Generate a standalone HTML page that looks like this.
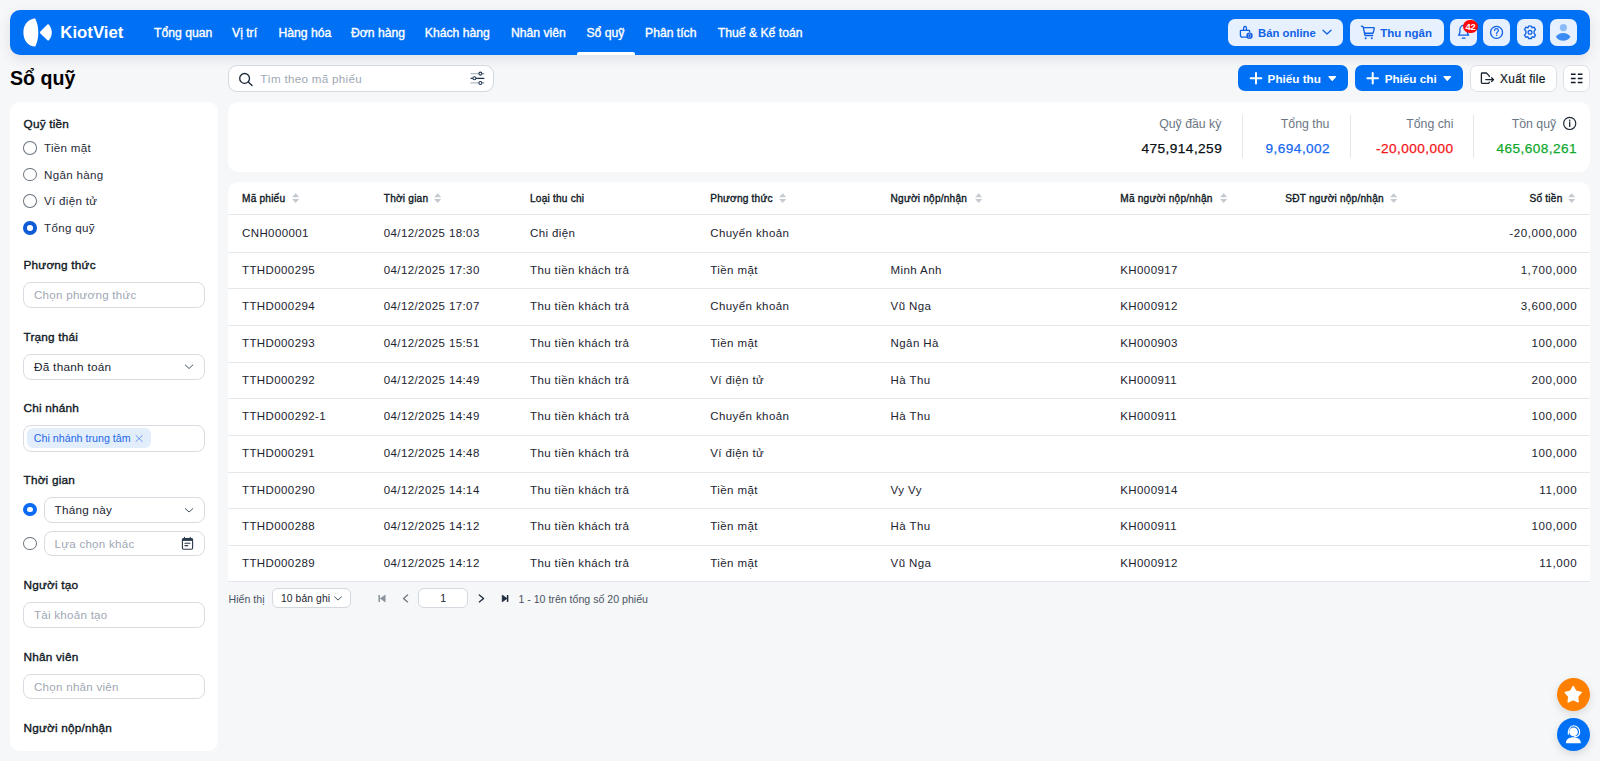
<!DOCTYPE html>
<html lang="vi">
<head>
<meta charset="utf-8">
<title>Sổ quỹ - KiotViet</title>
<style>
*{box-sizing:border-box;margin:0;padding:0}
html,body{width:1600px;height:761px;overflow:hidden}
body{background:#F6F7F9;font-family:"Liberation Sans",sans-serif;color:#0F1824;position:relative}
.abs{position:absolute}
svg{display:block}
#nav{position:absolute;left:10px;top:10px;width:1580px;height:44.6px;background:#0070F4;border-radius:10px;box-shadow:0 4px 12px rgba(20,30,50,.10)}
.navi{position:absolute;top:0;height:45px;line-height:45px;color:#fff;font-weight:normal;-webkit-text-stroke:0.35px #fff;font-size:12.2px;letter-spacing:0px;white-space:nowrap}
.nbtn{position:absolute;top:9px;height:27px;background:#E6F0FF;border-radius:7px;color:#0F62E6;font-weight:bold;font-size:11.4px;line-height:28.4px;white-space:nowrap}
.title{position:absolute;left:10px;top:65px;height:26px;line-height:26px;font-size:19.6px;font-weight:bold;color:#000;white-space:nowrap}
.card{position:absolute;background:#fff;border-radius:10px}
.bbtn{position:absolute;top:65px;height:26px;border-radius:7px;background:#0070F4;color:#fff;font-weight:bold;font-size:11.7px;line-height:26px;white-space:nowrap}
.wbtn{position:absolute;top:65px;height:26px;border-radius:7px;background:#fff;border:1px solid #DDE1E6;color:#0F1824;font-size:12.6px;line-height:24px;white-space:nowrap}
.lbl{position:absolute;left:23.5px;height:20px;line-height:20px;font-weight:normal;-webkit-text-stroke:0.35px #0F1824;font-size:11.8px;letter-spacing:0.2px;color:#0F1824;white-space:nowrap}
.radio{position:absolute;left:23px;width:13.8px;height:13.6px;border-radius:50%;border:1.1px solid #6B7480;background:#fff}
.radio.on{border:4.1px solid #0F5BD6}
.rlbl{position:absolute;left:44px;height:20px;line-height:20px;font-size:11.6px;letter-spacing:0.3px;margin-top:0px;color:#1F2A37;white-space:nowrap}
.inp{position:absolute;left:23px;width:182px;height:26px;border:1px solid #D8DCE2;border-radius:8px;background:#fff;font-size:11.6px;letter-spacing:0.25px;line-height:24px;padding-left:10px;color:#A0A8B4;white-space:nowrap}
.th{position:absolute;top:188.8px;height:20px;line-height:20px;font-weight:normal;-webkit-text-stroke:0.35px #0F1824;font-size:10.1px;letter-spacing:0.22px;color:#0F1824;white-space:nowrap}
.sort{position:absolute;top:193px}
.rowb{position:absolute;left:228px;width:1362px;height:1px;background:#E4E7EB}
.td{position:absolute;height:20px;line-height:20px;font-size:11.5px;letter-spacing:0.4px;color:#1B2430;white-space:nowrap}
.tdr{position:absolute;height:20px;line-height:20px;font-size:11.6px;letter-spacing:0.55px;margin-right:-0.55px;color:#1B2430;white-space:nowrap;right:13.5px;text-align:right}
.slbl{position:absolute;top:114px;height:20px;line-height:20px;font-size:12.3px;color:#6B7683;white-space:nowrap;text-align:right}
.sval{position:absolute;top:138.6px;height:20px;line-height:20px;font-size:13.6px;letter-spacing:0.45px;margin-right:-0.45px;-webkit-text-stroke:0.25px currentColor;color:#0F1824;white-space:nowrap;text-align:right}
.sdiv{position:absolute;top:115px;width:1px;height:43px;background:#E4E7EB}
.pg{position:absolute;top:588.8px;height:20px;line-height:20px;font-size:10.6px;color:#4A5563;white-space:nowrap}
</style>
</head>
<body>
<div id="nav"></div>
<svg class="abs" style="left:18px;top:14px" width="40" height="36" viewBox="0 0 40 36">
  <path d="M16.2 4.4 C8.8 5.8 5.4 11.5 5.4 18.4 C5.4 25.5 9 31.2 16.4 32.6 C16.9 32.7 17.3 32.4 17.5 32 C19.4 28 20.3 23.5 20.3 18.4 C20.3 13.3 19.4 8.9 17.4 4.9 C17.2 4.5 16.7 4.3 16.2 4.4 Z" fill="#fff"/>
  <path d="M22.4 17.5 L29.4 10.6 C29.9 10.1 30.8 10.2 31.1 10.8 C32.9 13.3 33.8 15.8 33.8 18.4 C33.8 21.1 32.9 23.6 31.1 26.1 C30.7 26.7 29.9 26.8 29.4 26.3 L22.4 19.4 C21.9 18.9 21.9 18 22.4 17.5 Z" fill="#fff"/>
</svg>
<div class="abs" style="left:60.3px;top:20px;height:25px;line-height:25px;color:#fff;font-weight:bold;font-size:16.8px;white-space:nowrap">KiotViet</div>
<div class="navi" style="left:154px;top:10.8px">Tổng quan</div>
<div class="navi" style="left:232px;top:10.8px">Vị trí</div>
<div class="navi" style="left:278.4px;top:10.8px">Hàng hóa</div>
<div class="navi" style="left:351px;top:10.8px">Đơn hàng</div>
<div class="navi" style="left:424.8px;top:10.8px">Khách hàng</div>
<div class="navi" style="left:511px;top:10.8px">Nhân viên</div>
<div class="navi" style="left:586.4px;top:10.8px">Sổ quỹ</div>
<div class="navi" style="left:645px;top:10.8px">Phân tích</div>
<div class="navi" style="left:717.8px;top:10.8px">Thuế &amp; Kế toán</div>
<div class="abs" style="left:577px;top:51.8px;width:58px;height:3px;background:#fff;border-radius:2px 2px 0 0"></div>

<div class="nbtn" style="left:1228.2px;top:19px;width:115px"></div>
<svg class="abs" style="left:1234px;top:20px" width="30" height="24" viewBox="1234 20 30 24">
  <path d="M1243.6 30 L1243.6 28.6 C1243.6 27.2 1244.2 26.3 1245 26.3 C1245.8 26.3 1246.5 27.2 1246.5 28.6 L1246.5 30" fill="none" stroke="#0F62E6" stroke-width="1.3" stroke-linecap="round"/>
  <path d="M1246.5 37.2 L1242.6 37.2 C1241.3 37.2 1240.4 36.3 1240.4 35 L1240.4 31 C1240.4 30.6 1240.7 30.3 1241.1 30.3 L1249 30.3 C1249.4 30.3 1249.6 30.6 1249.6 31 L1249.6 32" fill="none" stroke="#0F62E6" stroke-width="1.3" stroke-linecap="round" stroke-linejoin="round"/>
  <circle cx="1249.5" cy="35.8" r="3.2" fill="#0F62E6"/>
  <ellipse cx="1249.5" cy="35.8" rx="1" ry="2.3" fill="none" stroke="#C9B8F0" stroke-width="0.6"/>
</svg>
<div class="nbtn" style="left:1258px;top:19px;font-size:11.3px;background:none">Bán online</div>
<svg class="abs" style="left:1322px;top:28px" width="10" height="8" viewBox="0 0 10 8"><path d="M1 2.2 L5 6 L9 2.2" fill="none" stroke="#0F62E6" stroke-width="1.3" stroke-linecap="round" stroke-linejoin="round"/></svg>

<div class="nbtn" style="left:1350px;top:19px;width:93.5px"></div>
<svg class="abs" style="left:1356px;top:20px" width="30" height="24" viewBox="1356 20 30 24">
  <path d="M1361.4 26.2 L1362.6 26.5 C1363 26.6 1363.3 26.9 1363.3 27.3 L1364.9 35 C1365 35.3 1365.2 35.5 1365.5 35.5 L1372.7 35.5" fill="none" stroke="#0F62E6" stroke-width="1.35" stroke-linecap="round" stroke-linejoin="round"/>
  <path d="M1363.6 27.6 L1373.7 27.6 C1374.1 27.6 1374.4 28 1374.3 28.4 L1373.2 32.7 C1373.1 33 1372.9 33.2 1372.6 33.2 L1364.8 33.2" fill="none" stroke="#0F62E6" stroke-width="1.35" stroke-linecap="round" stroke-linejoin="round"/>
  <circle cx="1365.6" cy="38.2" r="1" fill="#0F62E6"/><circle cx="1371.8" cy="38.2" r="1" fill="#0F62E6"/>
</svg>
<div class="nbtn" style="left:1380.3px;top:19px;font-size:11.5px;background:none">Thu ngân</div>

<div class="nbtn" style="left:1450.4px;top:19px;width:26.6px"></div>
<svg class="abs" style="left:1450px;top:18px" width="30" height="28" viewBox="1450 18 30 28">
  <path d="M1458.6 35.2 L1468.6 35.2 C1467.6 34.2 1467.3 33 1467.3 31.5 L1467.3 29.6 C1467.3 27.3 1465.6 25.4 1463.6 25.4 C1461.6 25.4 1459.9 27.3 1459.9 29.6 L1459.9 31.5 C1459.9 33 1459.6 34.2 1458.6 35.2 Z" fill="none" stroke="#0F62E6" stroke-width="1.3" stroke-linejoin="round"/>
  <path d="M1462.3 38.2 L1465 38.2" stroke="#0F62E6" stroke-width="1.3" stroke-linecap="round"/>
</svg>
<div class="abs" style="left:1462.6px;top:19.7px;width:15.6px;height:13.2px;border-radius:7px;background:#F70A0A;color:#fff;font-weight:bold;font-size:9.4px;line-height:14.6px;text-align:center;letter-spacing:-0.2px">42</div>

<div class="nbtn" style="left:1483.3px;top:19px;width:26.6px"></div>
<svg class="abs" style="left:1482px;top:18px" width="30" height="28" viewBox="1482 18 30 28">
  <circle cx="1496.55" cy="32.35" r="6" fill="none" stroke="#0F62E6" stroke-width="1.3"/>
  <path d="M1494.6 30.6 C1494.6 29.5 1495.4 28.7 1496.5 28.7 C1497.6 28.7 1498.4 29.5 1498.4 30.5 C1498.4 31.8 1496.6 32 1496.6 33.5" fill="none" stroke="#0F62E6" stroke-width="1.2" stroke-linecap="round"/>
  <circle cx="1496.6" cy="35.3" r="0.75" fill="#0F62E6"/>
</svg>

<div class="nbtn" style="left:1516.5px;top:19px;width:26.8px"></div>
<svg class="abs" style="left:1514px;top:18px" width="32" height="28" viewBox="-16 -14.3 32 28">
  <path d="M-1.4 -6.2 L1.4 -6.2 L2.1 -4.4 L4.1 -5.1 L5.5 -2.8 L4.1 -1.2 L4.1 1.2 L5.5 2.8 L4.1 5.1 L2.1 4.4 L1.4 6.2 L-1.4 6.2 L-2.1 4.4 L-4.1 5.1 L-5.5 2.8 L-4.1 1.2 L-4.1 -1.2 L-5.5 -2.8 L-4.1 -5.1 L-2.1 -4.4 Z" fill="none" stroke="#0F62E6" stroke-width="1.3" stroke-linejoin="round"/>
  <circle cx="0" cy="0" r="1.9" fill="none" stroke="#0F62E6" stroke-width="1.3"/>
</svg>

<div class="nbtn" style="left:1550px;top:19px;width:26.8px"></div>
<svg class="abs" style="left:1548px;top:18px" width="44" height="28" viewBox="1548 18 44 28">
  <circle cx="1563.4" cy="27.6" r="3.6" fill="#8CBBFA"/>
  <path d="M1555.9 36.7 C1557.3 34.2 1560.2 32.9 1563.2 32.9 C1566.2 32.9 1569.1 34.2 1570.4 36.7 C1569.1 39.3 1566.2 40.8 1563.2 40.8 C1560.2 40.8 1557.3 39.3 1555.9 36.7 Z" fill="#3B8BF5"/>
</svg>

<div class="title">Sổ quỹ</div>
<div class="abs" style="left:228.4px;top:65.2px;width:266.1px;height:26.6px;background:#fff;border:1px solid #D3D8DE;border-radius:9px"></div>
<svg class="abs" style="left:236px;top:70px" width="20" height="18" viewBox="236 70 20 18">
  <circle cx="244.6" cy="78.4" r="4.9" fill="none" stroke="#1B2A3A" stroke-width="1.35"/>
  <path d="M248.3 82.1 L252 85.5" stroke="#1B2A3A" stroke-width="1.4" stroke-linecap="round"/>
</svg>
<div class="abs" style="left:260.2px;top:68.5px;height:20px;line-height:20px;font-size:11.6px;letter-spacing:0.3px;color:#A0A8B4;white-space:nowrap">Tìm theo mã phiếu</div>
<svg class="abs" style="left:464px;top:66px" width="28" height="24" viewBox="464 66 28 24">
  <path d="M471 73.6 L478.8 73.6 M471 82.9 L478.8 82.9" stroke="#B3BAC3" stroke-width="1.2" stroke-linecap="round"/>
  <path d="M482 73.6 L483.9 73.6 M482 82.9 L483.9 82.9" stroke="#8F99A5" stroke-width="1.2" stroke-linecap="round"/>
  <path d="M476 78.3 L483.9 78.3 M471 78.3 L472.8 78.3" stroke="#1E3450" stroke-width="1.2" stroke-linecap="round"/>
  <circle cx="480.4" cy="73.6" r="1.5" fill="#fff" stroke="#1E3450" stroke-width="1.05"/>
  <circle cx="474.4" cy="78.3" r="1.5" fill="#fff" stroke="#1E3450" stroke-width="1.05"/>
  <circle cx="480.4" cy="82.9" r="1.5" fill="#fff" stroke="#1E3450" stroke-width="1.05"/>
</svg>

<div class="bbtn" style="left:1238.4px;width:109.6px;height:26.3px"></div>
<svg class="abs" style="left:1248px;top:72px" width="16" height="13" viewBox="1248 72 16 13"><path d="M1256 73 L1256 83.5 M1250.7 78.25 L1261.3 78.25" stroke="#fff" stroke-width="2" stroke-linecap="round"/></svg>
<div class="bbtn" style="left:1267.6px;top:65.6px;background:none">Phiếu thu</div>
<svg class="abs" style="left:1326px;top:74px" width="12" height="9" viewBox="1326 74 12 9"><path d="M1328.9 76.6 L1335.6 76.6 L1332.25 80.3 Z" fill="#fff" stroke="#fff" stroke-width="1.2" stroke-linejoin="round"/></svg>

<div class="bbtn" style="left:1355px;width:107.7px;height:26.3px"></div>
<svg class="abs" style="left:1365px;top:72px" width="16" height="13" viewBox="1365 72 16 13"><path d="M1372.7 73 L1372.7 83.5 M1367.4 78.25 L1378 78.25" stroke="#fff" stroke-width="2" stroke-linecap="round"/></svg>
<div class="bbtn" style="left:1384.7px;top:65.6px;background:none">Phiếu chi</div>
<svg class="abs" style="left:1441px;top:74px" width="12" height="9" viewBox="1441 74 12 9"><path d="M1444 76.6 L1450.6 76.6 L1447.3 80.3 Z" fill="#fff" stroke="#fff" stroke-width="1.2" stroke-linejoin="round"/></svg>

<div class="wbtn" style="left:1470.3px;width:86.3px;height:26.6px"></div>
<svg class="abs" style="left:1474px;top:66px" width="30" height="24" viewBox="1474 66 30 24">
  <path d="M1489.3 76.6 L1489.3 75.9 L1486.4 73 L1482.2 73 C1481.7 73 1481.4 73.3 1481.4 73.8 L1481.4 82.6 C1481.4 83.1 1481.7 83.4 1482.2 83.4 L1488.5 83.4 C1489 83.4 1489.3 83.1 1489.3 82.6 L1489.3 82.1" fill="none" stroke="#1B2430" stroke-width="1.3" stroke-linejoin="round" stroke-linecap="round"/>
  <path d="M1485.8 79.6 L1493.5 79.6 M1491.6 77.7 L1493.6 79.6 L1491.6 81.5" fill="none" stroke="#1B2430" stroke-width="1.3" stroke-linecap="round" stroke-linejoin="round"/>
</svg>
<div class="wbtn" style="left:1500px;top:65.5px;border:0;background:none;height:26px;line-height:26px;font-size:11.9px;letter-spacing:0.3px;-webkit-text-stroke:0.2px #0F1824">Xuất file</div>

<div class="wbtn" style="left:1563.4px;width:26.2px;height:26.6px"></div>
<svg class="abs" style="left:1568px;top:71px" width="18" height="14" viewBox="1568 71 18 14">
  <path d="M1570.9 74.3 L1575.6 74.3 M1577.8 74.3 L1582.5 74.3 M1570.9 78.4 L1575.6 78.4 M1577.8 78.4 L1582.5 78.4 M1570.9 82.5 L1575.6 82.5 M1577.8 82.5 L1582.5 82.5" stroke="#0F1824" stroke-width="1.5"/>
</svg>
<div class="card" style="left:10px;top:102px;width:208px;height:648.5px"></div>
<div class="lbl" style="top:113.5px">Quỹ tiền</div>
<div class="radio" style="top:141.2px"></div><div class="rlbl" style="top:138.2px">Tiền mặt</div>
<div class="radio" style="top:167.5px"></div><div class="rlbl" style="top:164.5px">Ngân hàng</div>
<div class="radio" style="top:194px"></div><div class="rlbl" style="top:191px">Ví điện tử</div>
<div class="radio on" style="top:221.2px"></div><div class="rlbl" style="top:218.2px">Tổng quỹ</div>

<div class="lbl" style="top:254.9px">Phương thức</div>
<div class="inp" style="top:282px">Chọn phương thức</div>

<div class="lbl" style="top:326.5px">Trạng thái</div>
<div class="inp" style="top:353.6px;color:#1B2430;font-size:11.8px">Đã thanh toán</div>
<svg class="abs" style="left:183px;top:362px" width="12" height="9" viewBox="183 362 12 9"><path d="M185.3 365 L189.05 368.5 L192.8 365" fill="none" stroke="#3A4756" stroke-width="0.95" stroke-linecap="round" stroke-linejoin="round"/></svg>

<div class="lbl" style="top:398.2px">Chi nhánh</div>
<div class="inp" style="top:425.3px;height:26.3px"></div>
<div class="abs" style="left:26.8px;top:428.4px;width:124px;height:19.6px;background:#E3EEFD;border-radius:6px"></div>
<div class="abs" style="left:33.8px;top:428px;height:20px;line-height:20px;font-size:10.7px;color:#2468E8;white-space:nowrap">Chi nhánh trung tâm</div>
<svg class="abs" style="left:134px;top:433px" width="10" height="10" viewBox="134 433 10 10"><path d="M136 435.5 L142.3 441.5 M142.3 435.5 L136 441.5" stroke="#5A8BEA" stroke-width="0.9" stroke-linecap="round"/></svg>

<div class="lbl" style="top:469.6px">Thời gian</div>
<div class="radio on" style="top:502.9px;border-color:#0B6BF5"></div>
<div class="inp" style="top:497.3px;left:43.5px;width:161px;height:25.6px;color:#1B2430;font-size:11.7px">Tháng này</div>
<svg class="abs" style="left:183px;top:506px" width="12" height="9" viewBox="183 506 12 9"><path d="M185.3 508.6 L189.05 512 L192.8 508.6" fill="none" stroke="#3A4756" stroke-width="0.95" stroke-linecap="round" stroke-linejoin="round"/></svg>
<div class="radio" style="top:536.5px"></div>
<div class="inp" style="top:530.5px;left:43.5px;width:161px;height:25.9px">Lựa chọn khác</div>
<svg class="abs" style="left:178px;top:534px" width="18" height="18" viewBox="178 534 18 18">
  <rect x="182.4" y="538.6" width="10.2" height="10.7" rx="1.2" fill="none" stroke="#2B3A4A" stroke-width="1.1"/>
  <path d="M182.4 539.8 L192.6 539.8" stroke="#2B3A4A" stroke-width="2.2"/>
  <path d="M184.5 537.4 L184.5 538.4 M190.3 537.4 L190.3 538.4" stroke="#2B3A4A" stroke-width="1.1" stroke-linecap="round"/>
  <path d="M184.9 543.2 L190 543.2 M184.9 545.6 L187.8 545.6" stroke="#2B3A4A" stroke-width="1.1" stroke-linecap="round"/>
</svg>

<div class="lbl" style="top:575.4px">Người tạo</div>
<div class="inp" style="top:602.1px;height:25.9px">Tài khoản tạo</div>

<div class="lbl" style="top:646.9px">Nhân viên</div>
<div class="inp" style="top:673.8px;height:25.6px">Chọn nhân viên</div>

<div class="lbl" style="top:718.1px">Người nộp/nhận</div>
<div class="card" style="left:228px;top:102px;width:1362px;height:69.8px"></div>
<div class="slbl" style="right:378.6px">Quỹ đầu kỳ</div>
<div class="sval" style="right:378.3px;color:#0A0F16">475,914,259</div>
<div class="sdiv" style="left:1242px"></div>
<div class="slbl" style="right:270.6px">Tổng thu</div>
<div class="sval" style="right:270.3px;color:#1769F0">9,694,002</div>
<div class="sdiv" style="left:1350.2px"></div>
<div class="slbl" style="right:146.6px">Tổng chi</div>
<div class="sval" style="right:147px;color:#F5141A">-20,000,000</div>
<div class="sdiv" style="left:1473.3px"></div>
<div class="slbl" style="right:43.8px">Tồn quỹ</div>
<svg class="abs" style="left:1560px;top:114px" width="20" height="20" viewBox="1560 114 20 20">
  <circle cx="1569.7" cy="123.45" r="6.05" fill="none" stroke="#1F2A37" stroke-width="1.2"/>
  <path d="M1569.7 122 L1569.7 126.4" stroke="#1F2A37" stroke-width="1.3" stroke-linecap="round"/>
  <circle cx="1569.7" cy="120.2" r="0.8" fill="#1F2A37"/>
</svg>
<div class="sval" style="right:23.4px;color:#10A92E">465,608,261</div>
<div class="card" style="left:228px;top:181.5px;width:1362px;height:400.5px;border-radius:10px 10px 0 0"></div>
<div class="th" style="left:242px">Mã phiếu</div>
<svg class="sort" style="left:291.60px" width="7.5" height="11" viewBox="0 0 7.5 11"><path d="M3.65 0.3 L7.2 4.3 L0.1 4.3 Z M0.1 6 L7.2 6 L3.65 10 Z" fill="#C5CAD1"/></svg>
<div class="th" style="left:383.75px">Thời gian</div>
<svg class="sort" style="left:433.55px" width="7.5" height="11" viewBox="0 0 7.5 11"><path d="M3.65 0.3 L7.2 4.3 L0.1 4.3 Z M0.1 6 L7.2 6 L3.65 10 Z" fill="#C5CAD1"/></svg>
<div class="th" style="left:530px">Loại thu chi</div>
<div class="th" style="left:710.3px">Phương thức</div>
<svg class="sort" style="left:779.20px" width="7.5" height="11" viewBox="0 0 7.5 11"><path d="M3.65 0.3 L7.2 4.3 L0.1 4.3 Z M0.1 6 L7.2 6 L3.65 10 Z" fill="#C5CAD1"/></svg>
<div class="th" style="left:890.6px">Người nộp/nhận</div>
<svg class="sort" style="left:974.50px" width="7.5" height="11" viewBox="0 0 7.5 11"><path d="M3.65 0.3 L7.2 4.3 L0.1 4.3 Z M0.1 6 L7.2 6 L3.65 10 Z" fill="#C5CAD1"/></svg>
<div class="th" style="left:1120.3px">Mã người nộp/nhận</div>
<svg class="sort" style="left:1219.50px" width="7.5" height="11" viewBox="0 0 7.5 11"><path d="M3.65 0.3 L7.2 4.3 L0.1 4.3 Z M0.1 6 L7.2 6 L3.65 10 Z" fill="#C5CAD1"/></svg>
<div class="th" style="left:1285.3px">SĐT người nộp/nhận</div>
<svg class="sort" style="left:1390.40px" width="7.5" height="11" viewBox="0 0 7.5 11"><path d="M3.65 0.3 L7.2 4.3 L0.1 4.3 Z M0.1 6 L7.2 6 L3.65 10 Z" fill="#C5CAD1"/></svg>
<div class="th" style="right:37.5px;text-align:right">Số tiền</div>
<svg class="sort" style="left:1567.60px" width="7.5" height="11" viewBox="0 0 7.5 11"><path d="M3.65 0.3 L7.2 4.3 L0.1 4.3 Z M0.1 6 L7.2 6 L3.65 10 Z" fill="#C5CAD1"/></svg>
<div class="rowb" style="top:214px"></div>
<div class="rowb" style="top:252px"></div>
<div class="rowb" style="top:288px"></div>
<div class="rowb" style="top:325px"></div>
<div class="rowb" style="top:362px"></div>
<div class="rowb" style="top:398px"></div>
<div class="rowb" style="top:435px"></div>
<div class="rowb" style="top:472px"></div>
<div class="rowb" style="top:508px"></div>
<div class="rowb" style="top:545px"></div>
<div class="rowb" style="top:581px"></div>
<div class="td" style="left:242px;top:223.10px">CNH000001</div>
<div class="td" style="left:383.75px;top:223.10px">04/12/2025 18:03</div>
<div class="td" style="left:530px;top:223.10px">Chi điện</div>
<div class="td" style="left:710.3px;top:223.10px">Chuyển khoản</div>
<div class="tdr" style="right:23.4px;top:223.10px">-20,000,000</div>
<div class="td" style="left:242px;top:259.77px">TTHD000295</div>
<div class="td" style="left:383.75px;top:259.77px">04/12/2025 17:30</div>
<div class="td" style="left:530px;top:259.77px">Thu tiền khách trả</div>
<div class="td" style="left:710.3px;top:259.77px">Tiền mặt</div>
<div class="td" style="left:890.6px;top:259.77px">Minh Anh</div>
<div class="td" style="left:1120.3px;top:259.77px">KH000917</div>
<div class="tdr" style="right:23.4px;top:259.77px">1,700,000</div>
<div class="td" style="left:242px;top:296.44px">TTHD000294</div>
<div class="td" style="left:383.75px;top:296.44px">04/12/2025 17:07</div>
<div class="td" style="left:530px;top:296.44px">Thu tiền khách trả</div>
<div class="td" style="left:710.3px;top:296.44px">Chuyển khoản</div>
<div class="td" style="left:890.6px;top:296.44px">Vũ Nga</div>
<div class="td" style="left:1120.3px;top:296.44px">KH000912</div>
<div class="tdr" style="right:23.4px;top:296.44px">3,600,000</div>
<div class="td" style="left:242px;top:333.11px">TTHD000293</div>
<div class="td" style="left:383.75px;top:333.11px">04/12/2025 15:51</div>
<div class="td" style="left:530px;top:333.11px">Thu tiền khách trả</div>
<div class="td" style="left:710.3px;top:333.11px">Tiền mặt</div>
<div class="td" style="left:890.6px;top:333.11px">Ngân Hà</div>
<div class="td" style="left:1120.3px;top:333.11px">KH000903</div>
<div class="tdr" style="right:23.4px;top:333.11px">100,000</div>
<div class="td" style="left:242px;top:369.78px">TTHD000292</div>
<div class="td" style="left:383.75px;top:369.78px">04/12/2025 14:49</div>
<div class="td" style="left:530px;top:369.78px">Thu tiền khách trả</div>
<div class="td" style="left:710.3px;top:369.78px">Ví điện tử</div>
<div class="td" style="left:890.6px;top:369.78px">Hà Thu</div>
<div class="td" style="left:1120.3px;top:369.78px">KH000911</div>
<div class="tdr" style="right:23.4px;top:369.78px">200,000</div>
<div class="td" style="left:242px;top:406.45px">TTHD000292-1</div>
<div class="td" style="left:383.75px;top:406.45px">04/12/2025 14:49</div>
<div class="td" style="left:530px;top:406.45px">Thu tiền khách trả</div>
<div class="td" style="left:710.3px;top:406.45px">Chuyển khoản</div>
<div class="td" style="left:890.6px;top:406.45px">Hà Thu</div>
<div class="td" style="left:1120.3px;top:406.45px">KH000911</div>
<div class="tdr" style="right:23.4px;top:406.45px">100,000</div>
<div class="td" style="left:242px;top:443.12px">TTHD000291</div>
<div class="td" style="left:383.75px;top:443.12px">04/12/2025 14:48</div>
<div class="td" style="left:530px;top:443.12px">Thu tiền khách trả</div>
<div class="td" style="left:710.3px;top:443.12px">Ví điện tử</div>
<div class="tdr" style="right:23.4px;top:443.12px">100,000</div>
<div class="td" style="left:242px;top:479.79px">TTHD000290</div>
<div class="td" style="left:383.75px;top:479.79px">04/12/2025 14:14</div>
<div class="td" style="left:530px;top:479.79px">Thu tiền khách trả</div>
<div class="td" style="left:710.3px;top:479.79px">Tiền mặt</div>
<div class="td" style="left:890.6px;top:479.79px">Vy Vy</div>
<div class="td" style="left:1120.3px;top:479.79px">KH000914</div>
<div class="tdr" style="right:23.4px;top:479.79px">11,000</div>
<div class="td" style="left:242px;top:516.46px">TTHD000288</div>
<div class="td" style="left:383.75px;top:516.46px">04/12/2025 14:12</div>
<div class="td" style="left:530px;top:516.46px">Thu tiền khách trả</div>
<div class="td" style="left:710.3px;top:516.46px">Tiền mặt</div>
<div class="td" style="left:890.6px;top:516.46px">Hà Thu</div>
<div class="td" style="left:1120.3px;top:516.46px">KH000911</div>
<div class="tdr" style="right:23.4px;top:516.46px">100,000</div>
<div class="td" style="left:242px;top:553.13px">TTHD000289</div>
<div class="td" style="left:383.75px;top:553.13px">04/12/2025 14:12</div>
<div class="td" style="left:530px;top:553.13px">Thu tiền khách trả</div>
<div class="td" style="left:710.3px;top:553.13px">Tiền mặt</div>
<div class="td" style="left:890.6px;top:553.13px">Vũ Nga</div>
<div class="td" style="left:1120.3px;top:553.13px">KH000912</div>
<div class="tdr" style="right:23.4px;top:553.13px">11,000</div>
<div class="pg" style="left:228.6px">Hiển thị</div>
<div class="abs" style="left:272.1px;top:588.4px;width:79.2px;height:19.8px;border:1px solid #D3D8DE;border-radius:6px;background:#fff"></div>
<div class="pg" style="left:281px;top:589.3px;color:#1B2430;font-size:10.3px;letter-spacing:0.1px">10 bản ghi</div>
<svg class="abs" style="left:331px;top:594px" width="12" height="9" viewBox="331 594 12 9"><path d="M334.6 596.8 L338 600.1 L341.4 596.8" fill="none" stroke="#3A4756" stroke-width="0.95" stroke-linecap="round" stroke-linejoin="round"/></svg>
<svg class="abs" style="left:374px;top:590px" width="140" height="16" viewBox="374 590 140 16">
  <path d="M379.2 595 L379.2 601.9" stroke="#8A939D" stroke-width="1.5"/>
  <path d="M385.2 595 L385.2 601.9 L380.3 598.45 Z" fill="#8A939D" stroke="#8A939D" stroke-width="0.6" stroke-linejoin="round"/>
  <path d="M407.6 595 L403.5 598.45 L407.6 601.9" fill="none" stroke="#6F7882" stroke-width="1.3" stroke-linecap="round" stroke-linejoin="round"/>
  <path d="M479.3 595 L483.6 598.45 L479.3 601.9" fill="none" stroke="#1B2A3A" stroke-width="1.3" stroke-linecap="round" stroke-linejoin="round"/>
  <path d="M502.2 595 L502.2 601.9 L507.1 598.45 Z" fill="#1B2A3A" stroke="#1B2A3A" stroke-width="0.6" stroke-linejoin="round"/>
  <path d="M507.6 595 L507.6 601.9" stroke="#1B2A3A" stroke-width="1.5"/>
</svg>
<div class="abs" style="left:418.3px;top:588.3px;width:49.7px;height:20px;border:1px solid #D3D8DE;border-radius:6px;background:#fff;font-size:10.7px;line-height:18px;text-align:center;color:#1B2430">1</div>
<div class="pg" style="left:518.4px">1 - 10 trên tổng số 20 phiếu</div>

<div class="abs" style="left:1557px;top:677.6px;width:33px;height:33px;border-radius:50%;background:#FF7F00;box-shadow:0 3px 9px rgba(0,0,0,.13)"></div>
<svg class="abs" style="left:1557px;top:677.6px" width="33" height="33" viewBox="0 0 33 33">
  <path d="M16.2 8.6 L18.9 13.4 L24.1 14.5 L20.5 18.5 L21.1 23.8 L16.2 21.6 L11.3 23.8 L11.9 18.5 L8.3 14.5 L13.5 13.4 Z" fill="#fff" stroke="#fff" stroke-width="1.6" stroke-linejoin="round"/>
</svg>
<div class="abs" style="left:1557px;top:717.9px;width:33px;height:33px;border-radius:50%;background:#0070F4;box-shadow:0 3px 9px rgba(0,0,0,.13)"></div>
<svg class="abs" style="left:1557px;top:717.9px" width="33" height="33" viewBox="0 0 33 33">
  <path d="M11.3 16.3 C10.6 12.3 13.2 7.8 16.5 7.8 C20.1 7.8 23 11 22.7 14.6 C22.5 16.3 21.2 18 19.3 18.6 L17.6 18.6" fill="none" stroke="#fff" stroke-width="1.1" stroke-linecap="round"/>
  <circle cx="16.5" cy="13.9" r="4.3" fill="#fff"/>
  <path d="M8.9 25.3 L8.9 24.6 C8.9 21.4 12.2 19.2 16.35 19.2 C20.5 19.2 23.8 21.4 23.8 24.6 L23.8 25.3 Z" fill="#fff"/>
</svg>
</body></html>
